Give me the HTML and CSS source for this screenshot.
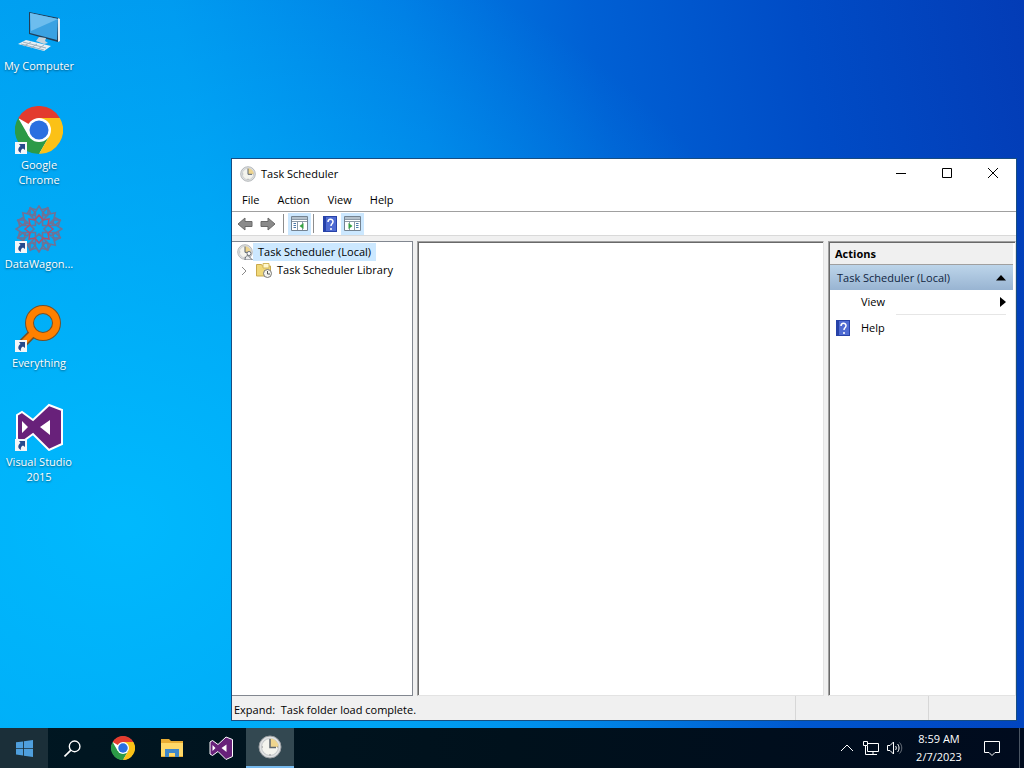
FILE: index.html
```html
<!DOCTYPE html>
<html lang="en">
<head>
    <meta charset="UTF-8">
    <meta name="viewport" content="width=device-width, initial-scale=1.0">
    <title>Task Scheduler</title>
    <link rel="stylesheet" href="styles.css">
</head>
<body>
    <!-- shared icons -->
    <svg class="sprite" aria-hidden="true">
        <symbol id="chrome" viewBox="0 0 48 48">
            <circle cx="24" cy="24" r="23" fill="#fff"/>
            <path d="M24 24 3.2 12A24 24 0 0 1 44.8 12z" fill="#e33b2e"/>
            <path d="M3.2 12A24 24 0 0 0 24 48l10.4-18L24 24 13.6 30z" fill="#2c9a47"/>
            <path d="M44.8 12A24 24 0 0 1 24 48L34.4 30 24 12z" fill="#fbc116"/>
            <circle cx="24" cy="24" r="12" fill="#fff"/>
            <circle cx="24" cy="24" r="9.5" fill="#2a6fe0"/>
        </symbol>
        <symbol id="shortcut" viewBox="0 0 12 12">
            <path d="M0 0h12v12H0z" fill="#f4f6f8"/>
            <path d="M4 2h6v6L8 6.5C6 7.5 5.5 9 6 11 2.5 9.5 2.5 6 5.5 4z" fill="#264a8c"/>
        </symbol>
        <symbol id="vs" viewBox="0 0 48 48">
            <path d="M2 12 7 9l11 8L34 2l13 5v34l-13 6-16-16-11 8-5-3z" fill="#68217a" stroke="#fff" stroke-width="2"/>
            <path d="M7 18v12l6-6zM35 17 25 24l10 8z" fill="#fff"/>
        </symbol>
        <symbol id="clock" viewBox="0 0 24 24">
            <circle cx="12" cy="12" r="11" fill="#dfe1e2" stroke="#9a9ea1"/>
            <circle cx="12" cy="12" r="8.5" fill="#f4f4ee" stroke="#c3c6c8"/>
            <path d="M12 12V3.5A8.5 8.5 0 0 1 20.5 12z" fill="#efd58e"/>
            <path d="M12 4v8.5h6" fill="none" stroke="#5d666e" stroke-width="1.5"/>
            <path d="M12 19v1.5M4 12h1M19 12h1" stroke="#888"/>
        </symbol>
        <symbol id="help" viewBox="0 0 14 16">
            <path d="M0 0h14v16H0z" fill="#2742a8"/>
            <path d="M3 1h10v14H3z" fill="#4f6bd2"/>
            <path d="M5 6c0-3.5 5-3.5 5-.5C10 8 8 7.5 8 10M8 12v2" fill="none" stroke="#fff" stroke-width="1.5"/>
        </symbol>
        <symbol id="arrow" viewBox="0 0 16 14">
            <path d="M1 7 8 1v3.500h7v5H8V13z" fill="#8b8b8b" stroke="#6a6a6a"/>
        </symbol>
        <symbol id="pane" viewBox="0 0 17 15">
            <path d="M.5.5h16v14H.5z" fill="#fff" stroke="#748391"/>
            <path d="M1 1h15v2H1z" fill="#b4c1cc"/>
            <path d="M1 3.500h15M1 5.500h15M6.500 6v8M11.500 6v8" stroke="#8d9ba8"/>
            <path d="M2.500 7.500H5M2.500 9.500H5M2.500 11.500H5" stroke="#4b78a8"/>
            <path d="M12.500 7v6L8.500 10z" fill="#37a344"/>
        </symbol>
    </svg>

    <main class="desktop">
        <nav class="shortcuts">
            <a class="shortcut" href="#">
                <span class="picture">
                    <svg viewBox="0 0 48 48">
                        <path d="M14 5 44 11 43 35 14 27z" fill="#223e58"/>
                        <path d="m15 6 28 6-1 21-27-7z" fill="#3ba2e2"/>
                        <path d="m15 6 28 6-27 12z" fill="#6dbdee"/>
                        <path d="M43 11v24l2-1V12z" fill="#e5edf2"/>
                        <path d="m24 30 7 1-1 3 3 2-4 1-8-3z" fill="#c6d2da"/>
                        <path d="m11 33 25 6-7 5L3 37z" fill="#e8eff3"/>
                        <path d="m8 35 23 6M6 37l23 6M16 35l-7 4M22 37l-6 4M29 38l-6 4" stroke="#9db1bf"/>
                    </svg>
                </span>
                My Computer
            </a>
            <a class="shortcut" href="#">
                <span class="picture">
                    <svg><use href="#chrome"/></svg>
                    <svg class="badge"><use href="#shortcut"/></svg>
                </span>
                Google Chrome
            </a>
            <a class="shortcut" href="#">
                <span class="picture">
                    <svg viewBox="-24 -24 48 48">
                        <g id="petals" fill="none" stroke="#6f7296" stroke-width="1.6">
                            <path id="petal" d="M0-5 7-12 0-23-7-12zM-4-9-9-14-9-21-2-19M4-9 9-14 9-21 2-19"/>
                            <use href="#petal" transform="rotate(45)"/>
                            <use href="#petal" transform="rotate(90)"/>
                            <use href="#petal" transform="rotate(135)"/>
                        </g>
                        <use href="#petals" transform="rotate(180)"/>
                        <path d="M0-14 4-9 10-10 9-4 14 0 9 4 10 10 4 9 0 14-4 9-10 10-9 4-14 0-9-4-10-10-4-9z" fill="none" stroke="#b0506c" stroke-width="1.5"/>
                    </svg>
                    <svg class="badge"><use href="#shortcut"/></svg>
                </span>
                DataWagon...
            </a>
            <a class="shortcut" href="#">
                <span class="picture">
                    <svg viewBox="0 0 48 48" fill="none">
                        <path d="M18 29 4 43" stroke="#765028" stroke-width="9"/>
                        <circle cx="28" cy="19" r="13.5" stroke="#765028" stroke-width="9"/>
                        <path d="M19 28 4 43" stroke="#ff8000" stroke-width="6"/>
                        <circle cx="28" cy="19" r="13.5" stroke="#ff8000" stroke-width="7"/>
                    </svg>
                    <svg class="badge"><use href="#shortcut"/></svg>
                </span>
                Everything
            </a>
            <a class="shortcut" href="#">
                <span class="picture">
                    <svg><use href="#vs"/></svg>
                    <svg class="badge"><use href="#shortcut"/></svg>
                </span>
                Visual Studio 2015
            </a>
        </nav>

        <section class="window">
            <header class="titlebar">
                <svg class="icon"><use href="#clock"/></svg>
                <h1>Task Scheduler</h1>
                <button class="caption" aria-label="Minimize"><svg viewBox="0 0 12 12"><path d="M1 5.500h10"/></svg></button>
                <button class="caption" aria-label="Maximize"><svg viewBox="0 0 12 12"><path d="M1.500.5h9v9h-9z"/></svg></button>
                <button class="caption" aria-label="Close"><svg viewBox="0 0 12 12"><path d="m1 0 10 10M11 0 1 10"/></svg></button>
            </header>
            <nav class="menubar">
                <button>File</button>
                <button>Action</button>
                <button>View</button>
                <button>Help</button>
            </nav>
            <div class="toolbar">
                <button aria-label="Back"><svg class="arrow"><use href="#arrow"/></svg></button>
                <button aria-label="Forward"><svg class="arrow flip"><use href="#arrow"/></svg></button>
                <span class="divider"></span>
                <button class="on" aria-label="Show console tree"><svg class="pane-icon"><use href="#pane"/></svg></button>
                <span class="divider"></span>
                <button aria-label="Help"><svg class="help-icon"><use href="#help"/></svg></button>
                <button class="on" aria-label="Show action pane"><svg class="pane-icon flip"><use href="#pane"/></svg></button>
            </div>
            <div class="panes">
                <ul class="tree">
                    <li>
                        <svg class="icon" viewBox="0 0 16 16">
                            <use href="#clock" width="16" height="16"/>
                            <path d="M8 16c0-3 1-4 3-4.500L15.500 16z" fill="#e8eaec" stroke="#6c7379"/>
                            <circle cx="12" cy="9.500" r="2" fill="#fff" stroke="#6c7379"/>
                        </svg>
                        <span class="selected">Task Scheduler (Local)</span>
                    </li>
                    <li>
                        <svg class="expander" viewBox="0 0 8 10"><path d="m2 2 4 4-4 4"/></svg>
                        <svg class="icon" viewBox="0 0 16 16">
                            <path d="M.5 2.500h5l1 1.500h8v10H.5z" fill="#f0d878" stroke="#c9a94c"/>
                            <path d="M7 1.500h6V6H7z" fill="#fff8cf" stroke="#d2b85f"/>
                            <circle cx="11.500" cy="11.500" r="4" fill="#f4f4ee" stroke="#777"/>
                            <path d="M11.500 9v3H14" fill="none" stroke="#555"/>
                        </svg>
                        <span>Task Scheduler Library</span>
                    </li>
                </ul>
                <div class="content"></div>
                <aside class="actions">
                    <h2>Actions</h2>
                    <button class="group">Task Scheduler (Local)<svg viewBox="0 0 10 6"><path d="M0 5.500 5 0l5 5.500z"/></svg></button>
                    <button class="action submenu"><span></span>View<svg viewBox="0 0 6 10"><path d="m0 0 6 5-6 5z"/></svg></button>
                    <hr>
                    <button class="action"><svg class="help-icon"><use href="#help"/></svg>Help</button>
                </aside>
            </div>
            <footer class="statusbar">
                <span class="message">Expand:&nbsp; Task folder load complete.</span>
                <span class="cell"></span>
                <span class="cell last"></span>
            </footer>
        </section>
    </main>

    <footer class="taskbar">
        <button class="start" aria-label="Start">
            <svg viewBox="0 0 16 16"><path d="M0 2.200 6.600 1.300v6.200H0zM7.400 1.200 16 0v7.500H7.400zM0 8.300h6.600v6.300L0 13.700zM7.400 8.300H16V16l-8.600-1.200z" fill="#4f9fdd"/></svg>
        </button>
        <button class="search" aria-label="Search">
            <svg viewBox="0 0 16 16"><path d="M6.500 9.500.5 15.500" stroke="#fff" stroke-width="1.500"/><circle cx="10" cy="6" r="5" fill="none" stroke="#fff" stroke-width="1.300"/></svg>
        </button>
        <button class="app" aria-label="Google Chrome"><svg><use href="#chrome"/></svg></button>
        <button class="app" aria-label="File Explorer">
            <svg viewBox="0 0 24 24">
                <path d="M1 3h8l2 2h12v16H1z" fill="#e9ad33"/>
                <path d="M1 7h22v13H1z" fill="#ffd968"/>
                <path d="M5 21v-8h14v8h-4v-4H9v4z" fill="#3f87c9"/>
            </svg>
        </button>
        <button class="app" aria-label="Visual Studio"><svg><use href="#vs"/></svg></button>
        <button class="app active" aria-label="Task Scheduler"><svg><use href="#clock"/></svg></button>

        <div class="tray">
            <svg viewBox="0 0 16 16"><path d="m2 11 6-6 6 6"/></svg>
            <svg viewBox="0 0 16 16"><path d="M5 3.500h10.500v8H4.500V6M10 12v2.500M6 14.500h8M.5 1.500h4v4h-4zM2.500 6v8.500H6"/></svg>
            <svg viewBox="0 0 16 16"><path d="M.5 5.500H3l3.500-3.500v12L3 10.500H.5zM8.500 6c1 1 1 3 0 4M10.500 4c2 2 2 6 0 8"/><path d="M12.500 2.500c3 3 3 8 0 11" opacity=".4"/></svg>
        </div>
        <time class="time" datetime="2023-02-07T08:59">8:59 AM<br>2/7/2023</time>
        <button class="notices" aria-label="Notifications"><svg viewBox="0 0 18 18"><path d="M1.500 2.500h15v11H12l-3 3-3-3H1.500z"/></svg></button>
    </footer>
</body>
</html>
```

FILE: styles.css
```css
* {
    box-sizing: border-box;
}

body {
    margin: 0;
    height: 100vh;
    display: flex;
    flex-direction: column;
    overflow: hidden;
    font-family: "Open Sans", "Noto Sans", sans-serif;
    font-size: 11px;
    line-height: 16px;
    color: #000;
}

button {
    margin: 0;
    padding: 0;
    border: 0;
    background: none;
    font: inherit;
    color: inherit;
}

svg {
    display: block;
    flex: none;
}

.sprite {
    position: absolute;
    width: 0;
    height: 0;
}

/* desktop */

.desktop {
    position: relative;
    flex: 1;
    background:
        radial-gradient(ellipse 70% 85% at 12% 72%, rgba(0, 188, 255, 0.9), rgba(0, 170, 255, 0)),
        linear-gradient(80deg, #00a0f0 0%, #0096ee 26%, #007ce4 46%, #0060d4 62%, #004cc6 80%, #033cb6 100%);
}

.shortcuts {
    display: flex;
    flex-direction: column;
    width: 78px;
    padding-top: 7px;
}

.shortcut {
    height: 99px;
    color: #fff;
    line-height: 15px;
    text-align: center;
    text-decoration: none;
    text-shadow: 0 1px 2px rgba(0, 0, 0, 0.5);
}

.picture {
    position: relative;
    display: block;
    width: 48px;
    height: 48px;
    margin: 0 auto 3px;
}

.picture svg {
    width: 48px;
    height: 48px;
}

.picture .badge {
    position: absolute;
    left: 0;
    bottom: 0;
    width: 12px;
    height: 12px;
}

/* window */

.window {
    position: absolute;
    top: 158px;
    right: 7px;
    bottom: 7px;
    left: 231px;
    display: flex;
    flex-direction: column;
    border: 1px solid #174d82;
    background: #f0f0f0;
}

.icon {
    width: 16px;
    height: 16px;
}

.titlebar {
    display: flex;
    align-items: center;
    height: 30px;
    padding-left: 8px;
    background: #fff;
}

.titlebar h1 {
    flex: 1;
    margin: 0 0 0 5px;
    font-size: 11px;
    font-weight: normal;
}

.caption {
    display: flex;
    justify-content: center;
    width: 46px;
}

.caption svg {
    width: 12px;
    height: 12px;
    fill: none;
    stroke: #000;
}

.menubar {
    display: flex;
    gap: 18px;
    height: 23px;
    padding-left: 10px;
    border-bottom: 1px solid #a0a0a0;
    background: #fff;
}

.toolbar {
    display: flex;
    align-items: center;
    height: 24px;
    padding-left: 1px;
    border-bottom: 1px solid #d9d9d9;
    background: #fff;
}

.toolbar button {
    display: flex;
    align-items: center;
    justify-content: center;
    width: 23px;
    height: 22px;
}

.toolbar .on {
    background: #cce8ff;
}

.divider {
    width: 1px;
    height: 19px;
    margin: 0 4px;
    background: #8d8d8d;
}

.on + .divider {
    margin-left: 2px;
}

.arrow {
    width: 16px;
    height: 14px;
}

.flip {
    transform: scaleX(-1);
}

.pane-icon {
    width: 17px;
    height: 15px;
}

.help-icon {
    width: 14px;
    height: 16px;
}

.panes {
    flex: 1;
    display: grid;
    grid-template-columns: 181px 1fr 188px;
    gap: 4px;
    padding-top: 5px;
}

.tree {
    margin: 0;
    padding: 1px 0 0 5px;
    list-style: none;
    border: 1px solid #828790;
    border-left: 0;
    background: #fff;
}

.tree li {
    display: flex;
    align-items: center;
    height: 18px;
}

.tree span {
    padding: 0 5px;
    line-height: 18px;
}

.tree .selected {
    background: #cce8ff;
}

.expander {
    width: 8px;
    height: 10px;
    margin: 0 8px 0 3px;
    fill: none;
    stroke: #8a8a8a;
}

.content,
.actions {
    padding: 1px 2px 0 1px;
    border: 1px solid #a0a0a0;
    border-right-color: #e3e3e3;
    border-bottom-color: #e3e3e3;
    box-shadow: inset 1px 1px #696969;
    background: #fff;
}

.actions h2 {
    height: 22px;
    margin: 0;
    padding: 3px 5px;
    font-size: 11px;
    font-weight: bold;
    line-height: 16px;
    background: #f0f0f0;
    border-bottom: 1px solid #a0a0a0;
}

.actions button {
    display: flex;
    align-items: center;
    width: 100%;
    height: 25px;
}

.actions .group {
    justify-content: space-between;
    padding: 0 7px;
    background: linear-gradient(#bdd5ea, #98b4d2);
    color: #10253f;
}

.group svg {
    width: 10px;
    height: 6px;
}

.actions .action {
    gap: 11px;
    padding-left: 6px;
}

.action span {
    width: 14px;
}

.actions .submenu {
    height: 24px;
}

.submenu svg {
    width: 6px;
    height: 10px;
    margin: 0 7px 0 auto;
}

.actions hr {
    height: 1px;
    margin: 0 7px 0 66px;
    border: 0;
    background: #e6e6e6;
}

.statusbar {
    display: flex;
    height: 24px;
    line-height: 27px;
}

.message {
    flex: 1;
    padding-left: 2px;
}

.cell {
    width: 133px;
    border-left: 1px solid #d7d7d7;
}

.last {
    width: 88px;
}

/* taskbar */

.taskbar {
    display: flex;
    height: 40px;
    background: linear-gradient(90deg, #001722, #00111c 50%, #000b1e);
    color: #fff;
}

.taskbar button {
    display: flex;
    align-items: center;
    justify-content: center;
    width: 48px;
}

.start {
    background: #1b2f39;
}

.start svg,
.search svg {
    width: 17px;
    height: 17px;
}

.search {
    margin-right: 2px;
}

.taskbar .app {
    margin-left: 1px;
}

.app svg {
    width: 24px;
    height: 24px;
}

.taskbar .active {
    border-bottom: 2px solid #76b9ed;
    background: #334851;
}

.tray {
    display: flex;
    align-items: center;
    gap: 8px;
    margin-left: auto;
}

.tray svg {
    width: 16px;
    height: 16px;
    fill: none;
    stroke: #fff;
}

.time {
    width: 72px;
    padding-top: 2px;
    line-height: 18px;
    text-align: center;
}

.taskbar .notices {
    width: 45px;
    margin-right: 4px;
    padding-right: 10px;
    border-right: 1px solid #4a5563;
}

.notices svg {
    width: 18px;
    height: 18px;
    fill: none;
    stroke: #fff;
}
```
